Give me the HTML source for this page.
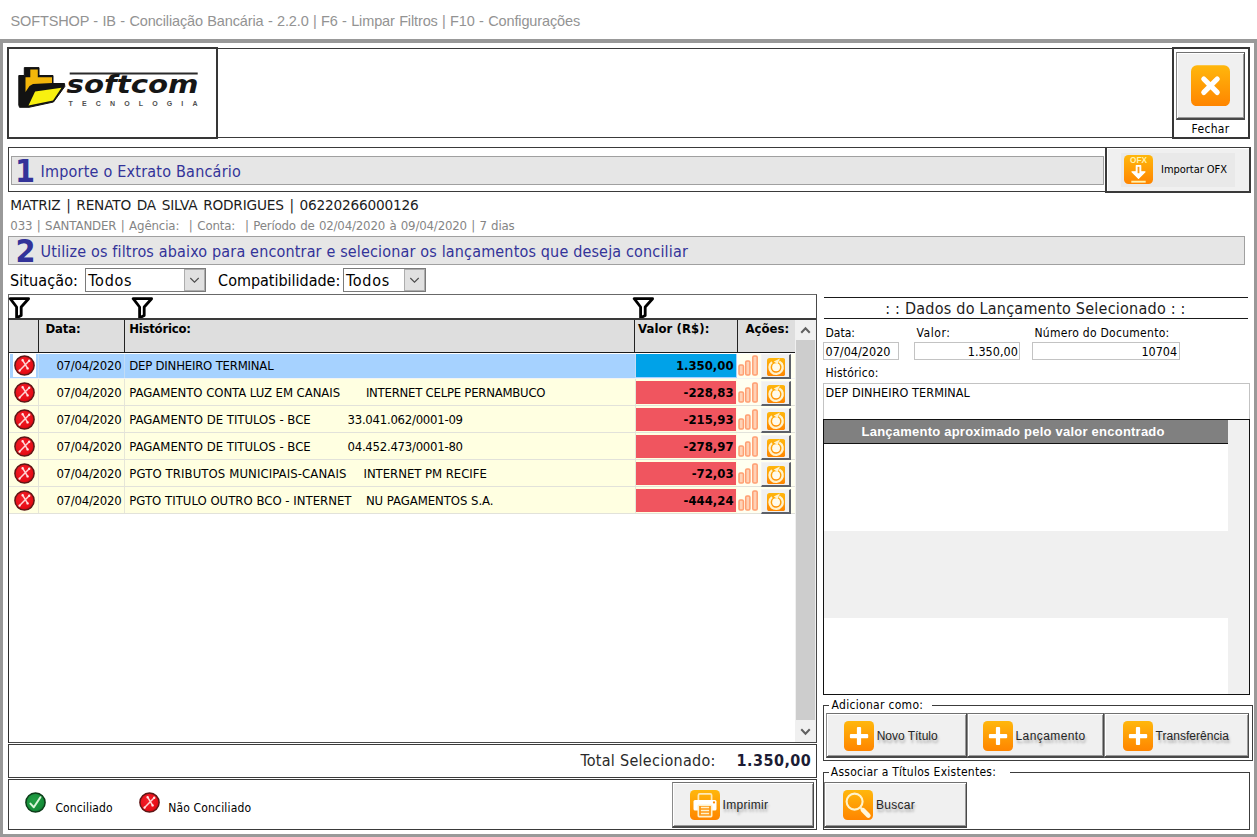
<!DOCTYPE html><html lang="pt-BR"><head><meta charset="utf-8"><title>SOFTSHOP - IB - Conciliação Bancária</title><style>
html,body{margin:0;padding:0;background:#fff}
body{width:1257px;height:837px;position:relative;overflow:hidden;font-family:"DejaVu Sans Condensed","Liberation Sans",sans-serif;color:#000}
div,span.t,svg,button,section,header,footer,fieldset,legend{position:absolute;box-sizing:border-box;margin:0;padding:0}
.t{white-space:pre}
.btn{background:#f0f0f0;border-style:solid;border-color:#707070 #484848 #484848 #8a8a8a;border-width:1px 1px 2px 1px;box-shadow:inset 1px 1px 0 #fff, inset -1px -1px 0 #9a9a9a;font:inherit}
.sbtn{background:#f0f0f0;border-style:solid;border-color:#f4f4f4 #5c6068 #5c6068 #f4f4f4;border-width:1px 2px 2px 1px;font:inherit}
.ar{color:#262626;text-shadow:1px 2.5px 2.5px rgba(0,0,0,.3)}
</style></head><body><svg width="0" height="0" style="left:0;top:0"><defs><linearGradient id="og" x1="0" y1="0" x2="0" y2="1"><stop offset="0" stop-color="#ffb70c"/><stop offset="1" stop-color="#ff8500"/></linearGradient><radialGradient id="rg" cx="0.42" cy="0.38" r="0.65"><stop offset="0" stop-color="#f4202a"/><stop offset="0.8" stop-color="#e60c16"/><stop offset="1" stop-color="#c00810"/></radialGradient><radialGradient id="gg" cx="0.42" cy="0.38" r="0.65"><stop offset="0" stop-color="#22a044"/><stop offset="0.8" stop-color="#148c38"/><stop offset="1" stop-color="#0e6c2a"/></radialGradient></defs></svg><header style="left:0;top:0;width:1257px;height:39px"><span class="t" style="left:10.50px;top:11.88px;font-size:14.5px;line-height:18px;font-family:'Liberation Sans',sans-serif;color:#939393;letter-spacing:-0.130px;word-spacing:0.5px;">SOFTSHOP - IB - Conciliação Bancária - 2.2.0 | F6 - Limpar Filtros | F10 - Configurações</span></header><div class="frame" style="left:0px;top:39px;width:1257px;height:798px;border-style:solid;border-color:#999999;border-width:4px 3px 3px 3px"></div><div style="left:218px;top:48px;width:955px;height:90px;border-top:1px solid #3a3a3a;border-bottom:1px solid #3a3a3a"></div><div class="logo" style="left:7px;top:47px;width:211px;height:92px;border:2px solid #363636;background:#fff"></div><svg style="left:15px;top:60px" width="195" height="55" viewBox="0 0 195 55"><polygon points="3.8,15.5 9.3,15.5 9.3,7.6 24,7.6 24,15.5 38,15.5 38,23.5 49.5,23.5 49.8,26.5 38.5,42 14,47.3 4.5,47.3 3.8,45" fill="#121212" stroke="#121212" stroke-width="1" stroke-linejoin="round"/><polygon points="10.5,17.3 15.3,17.3 15.3,9.6 22.8,9.6 22.8,17.3 37,17.3 37,23 18,24 14.5,26 10.5,32" fill="#f4b60a"/><polygon points="20.1,31.4 46.5,27.8 38,40.4 13.5,45.6" fill="#f8f010"/><path d="M54.7 13.5h128" stroke="#2a2a2a" stroke-width="2.2"/><text x="51.5" y="32.5" font-family="DejaVu Sans,Liberation Sans,sans-serif" font-weight="700" font-style="oblique" font-size="24.6" textLength="132" lengthAdjust="spacingAndGlyphs" fill="#161616">softcom</text><text x="53.5" y="45.6" font-family="Liberation Sans,sans-serif" font-weight="700" font-size="7" textLength="129" lengthAdjust="spacing" fill="#505050">TECNOLOGIA</text></svg><div style="left:1172px;top:47px;width:78px;height:92px;border:2px solid #363636;background:#fff"></div><button class="btn" style="left:1176px;top:52px;width:69px;height:68px;"></button><svg style="left:1191px;top:64.6px" width="39" height="41.4" viewBox="0 0 39 41"><rect x="0" y="0" width="39" height="41" rx="6" fill="url(#og)"/><path d="M12.8 13.8l13.4 13.4M26.2 13.8l-13.4 13.4" stroke="#fff" stroke-width="5.2" stroke-linecap="round"/></svg><span class="t" style="left:1191.50px;top:122.05px;font-size:12px;line-height:15px;letter-spacing:0.345px;">Fechar</span><div style="left:8px;top:147px;width:1098px;height:45px;border:1px solid #3a3a3a"></div><div style="left:11px;top:156px;width:1093px;height:29px;background:#e6e6e6;border:1px solid #a0a0a0"></div><span class="t" style="left:15.00px;top:150.93px;font-size:32px;line-height:40px;font-weight:700;color:#333399;">1</span><span class="t" style="left:40.50px;top:161.96px;font-size:16px;line-height:20px;color:#333399;letter-spacing:0.218px;">Importe o Extrato Bancário</span><button style="left:1105px;top:147px;width:146px;height:46px;background:#f0f0f0;border-style:solid;border-color:#3a3a3a;border-width:1px 2px 2px 2px;box-shadow:inset 1px 1px 0 #fff"></button><div style="left:1120.5px;top:152.5px;width:114.5px;height:34px;background:#e9e9e9"></div><svg style="left:1124px;top:155px" width="29" height="29" viewBox="0 0 29 29"><rect width="29" height="29" rx="4.5" fill="url(#og)"/><text x="14.5" y="8" text-anchor="middle" font-family="Liberation Sans,sans-serif" font-weight="700" font-size="8.2" fill="#fff3b0">OFX</text><path d="M12.3 10.6h4.4v6.2h4.3L14.5 23.4 8 16.8h4.3z" fill="#fff" stroke="#fff" stroke-width="1.2" stroke-linejoin="round"/><path d="M13.6 11.8h1.8v6.4h-1.8z" fill="#ff9a10"/><path d="M7.3 26.7h14.4" stroke="#fff3b0" stroke-width="1.9"/></svg><span class="t" style="left:1161.00px;top:162.89px;font-size:11px;line-height:14px;letter-spacing:-0.031px;">Importar OFX</span><span class="t" style="left:10.30px;top:196.96px;font-size:13.7px;line-height:17px;font-family:'DejaVu Sans','Liberation Sans',sans-serif;color:#1c1c1c;letter-spacing:-0.204px;word-spacing:1.6px;">MATRIZ | RENATO DA SILVA RODRIGUES | 06220266000126</span><span class="t" style="left:10.30px;top:218.92px;font-size:11.8px;line-height:15px;font-family:'DejaVu Sans','Liberation Sans',sans-serif;color:#858585;letter-spacing:-0.133px;word-spacing:0.8px;">033 | SANTANDER | Agência:</span><span class="t" style="left:188.70px;top:218.92px;font-size:11.8px;line-height:15px;font-family:'DejaVu Sans','Liberation Sans',sans-serif;color:#858585;letter-spacing:-0.148px;word-spacing:1.2px;">| Conta:</span><span class="t" style="left:245.00px;top:218.92px;font-size:11.8px;line-height:15px;font-family:'DejaVu Sans','Liberation Sans',sans-serif;color:#858585;letter-spacing:-0.188px;word-spacing:0.8px;">| Período de 02/04/2020 à 09/04/2020 | 7 dias</span><div style="left:8px;top:236px;width:1237px;height:28.5px;background:#e6e6e6;border:1px solid #a0a0a0"></div><span class="t" style="left:15.50px;top:230.93px;font-size:32px;line-height:40px;font-weight:700;color:#333399;">2</span><span class="t" style="left:40.50px;top:242.26px;font-size:16px;line-height:20px;color:#333399;letter-spacing:0.161px;">Utilize os filtros abaixo para encontrar e selecionar os lançamentos que deseja conciliar</span><span class="t" style="left:10.00px;top:270.76px;font-size:16px;line-height:20px;letter-spacing:0.097px;">Situação:</span><div class="combo" style="left:85.4px;top:268px;width:120.4px;height:23.6px;background:#fff;border:1px solid #7a7a7a"></div><div style="left:183.8px;top:269px;width:21px;height:21.6px;background:#e1e1e1;border:1px solid #adadad"></div><svg style="left:183.8px;top:269px" width="21" height="21.6" viewBox="0 0 21 21.6"><path d="M6.3 9 l4.2 4.2 l4.2 -4.2" fill="none" stroke="#4c4c4c" stroke-width="1.1"/></svg><span class="t" style="left:88.30px;top:270.96px;font-size:16px;line-height:20px;letter-spacing:0.734px;">Todos</span><span class="t" style="left:218.10px;top:270.76px;font-size:16px;line-height:20px;letter-spacing:-0.015px;">Compatibilidade:</span><div class="combo" style="left:343.2px;top:268px;width:82.8px;height:23.6px;background:#fff;border:1px solid #7a7a7a"></div><div style="left:404px;top:269px;width:21px;height:21.6px;background:#e1e1e1;border:1px solid #adadad"></div><svg style="left:404px;top:269px" width="21" height="21.6" viewBox="0 0 21 21.6"><path d="M6.3 9 l4.2 4.2 l4.2 -4.2" fill="none" stroke="#4c4c4c" stroke-width="1.1"/></svg><span class="t" style="left:346.00px;top:270.96px;font-size:16px;line-height:20px;letter-spacing:0.734px;">Todos</span><div class="grid" style="left:8px;top:294px;width:809px;height:449px;border-style:solid;border-width:1px;border-color:#686868 #484848 #484848 #686868;background:#fff"></div><div style="left:8px;top:318px;width:1px;height:425px;background:#2a2a2a"></div><svg style="left:7.7px;top:295.5px" width="23" height="23" viewBox="0 0 23 23"><path d="M2.2 2.7h18.4l-7.4 8.3v8.4l-4.6 2.4v-10.8z" fill="#fff" stroke="#000" stroke-width="2.8" stroke-linejoin="round"/></svg><svg style="left:130.5px;top:295.5px" width="23" height="23" viewBox="0 0 23 23"><path d="M2.2 2.7h18.4l-7.4 8.3v8.4l-4.6 2.4v-10.8z" fill="#fff" stroke="#000" stroke-width="2.8" stroke-linejoin="round"/></svg><svg style="left:631.5px;top:295.5px" width="23" height="23" viewBox="0 0 23 23"><path d="M2.2 2.7h18.4l-7.4 8.3v8.4l-4.6 2.4v-10.8z" fill="#fff" stroke="#000" stroke-width="2.8" stroke-linejoin="round"/></svg><div style="left:9px;top:318px;width:807px;height:2px;background:#3a3a3a"></div><div class="ghead" style="left:9px;top:320px;width:786px;height:33.3px;background:#dedede;border-bottom:1px solid #1a1a1a"></div><div style="left:37.7px;top:320px;width:1.6px;height:32px;background:#222"></div><div style="left:123.7px;top:320px;width:1.6px;height:32px;background:#222"></div><div style="left:633.7px;top:320px;width:1.6px;height:32px;background:#222"></div><div style="left:736.7px;top:320px;width:1.6px;height:32px;background:#222"></div><span class="t" style="left:45.50px;top:320.70px;font-size:13px;line-height:16px;font-weight:700;letter-spacing:-0.153px;">Data:</span><span class="t" style="left:129.20px;top:320.70px;font-size:13px;line-height:16px;font-weight:700;letter-spacing:-0.231px;">Histórico:</span><span class="t" style="left:638.00px;top:320.70px;font-size:13px;line-height:16px;font-weight:700;letter-spacing:0.080px;">Valor (R$):</span><span class="t" style="left:745.40px;top:320.70px;font-size:13px;line-height:16px;font-weight:700;letter-spacing:0.032px;">Ações:</span><div style="left:795px;top:320px;width:21px;height:422px;background:#f0f0f0"></div><div style="left:796px;top:340px;width:19px;height:380px;background:#cdcdcd"></div><svg style="left:795px;top:320px" width="21" height="422" viewBox="0 0 21 422"><path d="M6.25 12.75 l4.25 -4.5 l4.25 4.5" fill="none" stroke="#606060" stroke-width="2"/><path d="M6.25 409.25 l4.25 4.5 l4.25 -4.5" fill="none" stroke="#606060" stroke-width="2"/></svg><div style="left:10px;top:353.5px;width:785px;height:24.5px;background:#a6d2ff"></div><div style="left:737px;top:353.5px;width:58px;height:24.5px;background:#fffff0"></div><div style="left:9px;top:378px;width:786px;height:1px;background:#f4f4f4"></div><div style="left:38px;top:353.5px;width:1px;height:24.5px;background:#c2dcf5"></div><div style="left:124px;top:353.5px;width:1px;height:24.5px;background:#c2dcf5"></div><div style="left:634.5px;top:353.5px;width:1px;height:24.5px;background:#c2dcf5"></div><div style="left:13px;top:354px;width:23.3px;height:23.2px;background:#fff"></div><svg style="left:14px;top:355px" width="21" height="21" viewBox="0 0 21 21"><circle cx="10.5" cy="10.5" r="9.6" fill="url(#rg)" stroke="#5e1616" stroke-width="1.5"/><path d="M8.6 5.2l5 8.2M15.2 5.8L5.6 15.6" stroke="#ffd6d6" stroke-width="1.5" stroke-linecap="round"/><path d="M15.2 5.8h.01M5.6 15.6h.01M8.6 5.2h.01M13.6 13.4h.01" stroke="#ffe4e4" stroke-width="2.4" stroke-linecap="round"/></svg><span class="t" style="left:56.40px;top:358.20px;font-size:13px;line-height:16px;letter-spacing:-0.241px;">07/04/2020</span><span class="t" style="left:129.20px;top:358.20px;font-size:13px;line-height:16px;letter-spacing:-0.200px;">DEP DINHEIRO TERMINAL</span><div style="left:636px;top:354px;width:100px;height:23px;background:#00a2e8"></div><span class="t" style="left:675.88px;top:358.20px;font-size:13px;line-height:16px;font-weight:700;">1.350,00</span><svg style="left:738px;top:355.2px" width="21" height="22" viewBox="0 0 21 22"><rect x="1" y="10" width="4.4" height="10" rx="1.3" fill="#ffd2b6" stroke="#ff9f72" stroke-width="1.5"/><rect x="7.7" y="6" width="4.2" height="14" rx="1.3" fill="#ffd2b6" stroke="#ff9f72" stroke-width="1.5"/><rect x="14.8" y="1" width="4.4" height="19" rx="1.3" fill="#ffd2b6" stroke="#ff9f72" stroke-width="1.5"/></svg><button class="sbtn" style="left:761px;top:354.3px;width:30.2px;height:25.2px;"></button><svg style="left:767px;top:357.6px" width="18.2" height="18.2" viewBox="0 0 18 18"><rect width="18" height="18" rx="2.5" fill="url(#og)"/><path d="M12.08 3.42 A6.55 6.55 0 1 1 4.97 4.04" fill="none" stroke="#fff2cc" stroke-width="2.3"/><path d="M10.46 5.91 L12.82 0.61 L6.64 3.36 z" fill="#fff2cc"/><circle cx="9" cy="9.2" r="3.9" fill="#fffaea"/></svg><div style="left:9px;top:379px;width:786px;height:26px;background:#ffffe1"></div><div style="left:737px;top:379px;width:58px;height:26px;background:#fffff0"></div><div style="left:9px;top:405px;width:786px;height:1px;background:#e2e2da"></div><div style="left:38px;top:379px;width:1px;height:26px;background:#e6e6d8"></div><div style="left:124px;top:379px;width:1px;height:26px;background:#e6e6d8"></div><div style="left:634.5px;top:379px;width:1px;height:26px;background:#e6e6d8"></div><svg style="left:14px;top:382px" width="21" height="21" viewBox="0 0 21 21"><circle cx="10.5" cy="10.5" r="9.6" fill="url(#rg)" stroke="#5e1616" stroke-width="1.5"/><path d="M8.6 5.2l5 8.2M15.2 5.8L5.6 15.6" stroke="#ffd6d6" stroke-width="1.5" stroke-linecap="round"/><path d="M15.2 5.8h.01M5.6 15.6h.01M8.6 5.2h.01M13.6 13.4h.01" stroke="#ffe4e4" stroke-width="2.4" stroke-linecap="round"/></svg><span class="t" style="left:56.40px;top:385.20px;font-size:13px;line-height:16px;letter-spacing:-0.241px;">07/04/2020</span><span class="t" style="left:129.30px;top:385.20px;font-size:13px;line-height:16px;letter-spacing:-0.049px;">PAGAMENTO CONTA LUZ EM CANAIS</span><span class="t" style="left:365.90px;top:385.20px;font-size:13px;line-height:16px;letter-spacing:-0.241px;">INTERNET CELPE PERNAMBUCO</span><div style="left:636px;top:381px;width:100px;height:23px;background:#f0555f"></div><span class="t" style="left:683.60px;top:385.20px;font-size:13px;line-height:16px;font-weight:700;">-228,83</span><svg style="left:738px;top:382.2px" width="21" height="22" viewBox="0 0 21 22"><rect x="1" y="10" width="4.4" height="10" rx="1.3" fill="#ffd2b6" stroke="#ff9f72" stroke-width="1.5"/><rect x="7.7" y="6" width="4.2" height="14" rx="1.3" fill="#ffd2b6" stroke="#ff9f72" stroke-width="1.5"/><rect x="14.8" y="1" width="4.4" height="19" rx="1.3" fill="#ffd2b6" stroke="#ff9f72" stroke-width="1.5"/></svg><button class="sbtn" style="left:761px;top:381.3px;width:30.2px;height:25.2px;"></button><svg style="left:767px;top:384.6px" width="18.2" height="18.2" viewBox="0 0 18 18"><rect width="18" height="18" rx="2.5" fill="url(#og)"/><path d="M12.08 3.42 A6.55 6.55 0 1 1 4.97 4.04" fill="none" stroke="#fff2cc" stroke-width="2.3"/><path d="M10.46 5.91 L12.82 0.61 L6.64 3.36 z" fill="#fff2cc"/><circle cx="9" cy="9.2" r="3.9" fill="#fffaea"/></svg><div style="left:9px;top:406px;width:786px;height:26px;background:#ffffe1"></div><div style="left:737px;top:406px;width:58px;height:26px;background:#fffff0"></div><div style="left:9px;top:432px;width:786px;height:1px;background:#e2e2da"></div><div style="left:38px;top:406px;width:1px;height:26px;background:#e6e6d8"></div><div style="left:124px;top:406px;width:1px;height:26px;background:#e6e6d8"></div><div style="left:634.5px;top:406px;width:1px;height:26px;background:#e6e6d8"></div><svg style="left:14px;top:409px" width="21" height="21" viewBox="0 0 21 21"><circle cx="10.5" cy="10.5" r="9.6" fill="url(#rg)" stroke="#5e1616" stroke-width="1.5"/><path d="M8.6 5.2l5 8.2M15.2 5.8L5.6 15.6" stroke="#ffd6d6" stroke-width="1.5" stroke-linecap="round"/><path d="M15.2 5.8h.01M5.6 15.6h.01M8.6 5.2h.01M13.6 13.4h.01" stroke="#ffe4e4" stroke-width="2.4" stroke-linecap="round"/></svg><span class="t" style="left:56.40px;top:412.20px;font-size:13px;line-height:16px;letter-spacing:-0.241px;">07/04/2020</span><span class="t" style="left:129.30px;top:412.20px;font-size:13px;line-height:16px;">PAGAMENTO DE TITULOS - BCE</span><span class="t" style="left:347.50px;top:412.20px;font-size:13px;line-height:16px;letter-spacing:-0.247px;">33.041.062/0001-09</span><div style="left:636px;top:408px;width:100px;height:23px;background:#f0555f"></div><span class="t" style="left:683.60px;top:412.20px;font-size:13px;line-height:16px;font-weight:700;">-215,93</span><svg style="left:738px;top:409.2px" width="21" height="22" viewBox="0 0 21 22"><rect x="1" y="10" width="4.4" height="10" rx="1.3" fill="#ffd2b6" stroke="#ff9f72" stroke-width="1.5"/><rect x="7.7" y="6" width="4.2" height="14" rx="1.3" fill="#ffd2b6" stroke="#ff9f72" stroke-width="1.5"/><rect x="14.8" y="1" width="4.4" height="19" rx="1.3" fill="#ffd2b6" stroke="#ff9f72" stroke-width="1.5"/></svg><button class="sbtn" style="left:761px;top:408.3px;width:30.2px;height:25.2px;"></button><svg style="left:767px;top:411.6px" width="18.2" height="18.2" viewBox="0 0 18 18"><rect width="18" height="18" rx="2.5" fill="url(#og)"/><path d="M12.08 3.42 A6.55 6.55 0 1 1 4.97 4.04" fill="none" stroke="#fff2cc" stroke-width="2.3"/><path d="M10.46 5.91 L12.82 0.61 L6.64 3.36 z" fill="#fff2cc"/><circle cx="9" cy="9.2" r="3.9" fill="#fffaea"/></svg><div style="left:9px;top:433px;width:786px;height:26px;background:#ffffe1"></div><div style="left:737px;top:433px;width:58px;height:26px;background:#fffff0"></div><div style="left:9px;top:459px;width:786px;height:1px;background:#e2e2da"></div><div style="left:38px;top:433px;width:1px;height:26px;background:#e6e6d8"></div><div style="left:124px;top:433px;width:1px;height:26px;background:#e6e6d8"></div><div style="left:634.5px;top:433px;width:1px;height:26px;background:#e6e6d8"></div><svg style="left:14px;top:436px" width="21" height="21" viewBox="0 0 21 21"><circle cx="10.5" cy="10.5" r="9.6" fill="url(#rg)" stroke="#5e1616" stroke-width="1.5"/><path d="M8.6 5.2l5 8.2M15.2 5.8L5.6 15.6" stroke="#ffd6d6" stroke-width="1.5" stroke-linecap="round"/><path d="M15.2 5.8h.01M5.6 15.6h.01M8.6 5.2h.01M13.6 13.4h.01" stroke="#ffe4e4" stroke-width="2.4" stroke-linecap="round"/></svg><span class="t" style="left:56.40px;top:439.20px;font-size:13px;line-height:16px;letter-spacing:-0.241px;">07/04/2020</span><span class="t" style="left:129.30px;top:439.20px;font-size:13px;line-height:16px;">PAGAMENTO DE TITULOS - BCE</span><span class="t" style="left:347.50px;top:439.20px;font-size:13px;line-height:16px;letter-spacing:-0.247px;">04.452.473/0001-80</span><div style="left:636px;top:435px;width:100px;height:23px;background:#f0555f"></div><span class="t" style="left:683.60px;top:439.20px;font-size:13px;line-height:16px;font-weight:700;">-278,97</span><svg style="left:738px;top:436.2px" width="21" height="22" viewBox="0 0 21 22"><rect x="1" y="10" width="4.4" height="10" rx="1.3" fill="#ffd2b6" stroke="#ff9f72" stroke-width="1.5"/><rect x="7.7" y="6" width="4.2" height="14" rx="1.3" fill="#ffd2b6" stroke="#ff9f72" stroke-width="1.5"/><rect x="14.8" y="1" width="4.4" height="19" rx="1.3" fill="#ffd2b6" stroke="#ff9f72" stroke-width="1.5"/></svg><button class="sbtn" style="left:761px;top:435.3px;width:30.2px;height:25.2px;"></button><svg style="left:767px;top:438.6px" width="18.2" height="18.2" viewBox="0 0 18 18"><rect width="18" height="18" rx="2.5" fill="url(#og)"/><path d="M12.08 3.42 A6.55 6.55 0 1 1 4.97 4.04" fill="none" stroke="#fff2cc" stroke-width="2.3"/><path d="M10.46 5.91 L12.82 0.61 L6.64 3.36 z" fill="#fff2cc"/><circle cx="9" cy="9.2" r="3.9" fill="#fffaea"/></svg><div style="left:9px;top:460px;width:786px;height:26px;background:#ffffe1"></div><div style="left:737px;top:460px;width:58px;height:26px;background:#fffff0"></div><div style="left:9px;top:486px;width:786px;height:1px;background:#e2e2da"></div><div style="left:38px;top:460px;width:1px;height:26px;background:#e6e6d8"></div><div style="left:124px;top:460px;width:1px;height:26px;background:#e6e6d8"></div><div style="left:634.5px;top:460px;width:1px;height:26px;background:#e6e6d8"></div><svg style="left:14px;top:463px" width="21" height="21" viewBox="0 0 21 21"><circle cx="10.5" cy="10.5" r="9.6" fill="url(#rg)" stroke="#5e1616" stroke-width="1.5"/><path d="M8.6 5.2l5 8.2M15.2 5.8L5.6 15.6" stroke="#ffd6d6" stroke-width="1.5" stroke-linecap="round"/><path d="M15.2 5.8h.01M5.6 15.6h.01M8.6 5.2h.01M13.6 13.4h.01" stroke="#ffe4e4" stroke-width="2.4" stroke-linecap="round"/></svg><span class="t" style="left:56.40px;top:466.20px;font-size:13px;line-height:16px;letter-spacing:-0.241px;">07/04/2020</span><span class="t" style="left:129.30px;top:466.20px;font-size:13px;line-height:16px;letter-spacing:0.101px;">PGTO TRIBUTOS MUNICIPAIS-CANAIS</span><span class="t" style="left:363.50px;top:466.20px;font-size:13px;line-height:16px;letter-spacing:-0.036px;">INTERNET PM RECIFE</span><div style="left:636px;top:462px;width:100px;height:23px;background:#f0555f"></div><span class="t" style="left:691.74px;top:466.20px;font-size:13px;line-height:16px;font-weight:700;">-72,03</span><svg style="left:738px;top:463.2px" width="21" height="22" viewBox="0 0 21 22"><rect x="1" y="10" width="4.4" height="10" rx="1.3" fill="#ffd2b6" stroke="#ff9f72" stroke-width="1.5"/><rect x="7.7" y="6" width="4.2" height="14" rx="1.3" fill="#ffd2b6" stroke="#ff9f72" stroke-width="1.5"/><rect x="14.8" y="1" width="4.4" height="19" rx="1.3" fill="#ffd2b6" stroke="#ff9f72" stroke-width="1.5"/></svg><button class="sbtn" style="left:761px;top:462.3px;width:30.2px;height:25.2px;"></button><svg style="left:767px;top:465.6px" width="18.2" height="18.2" viewBox="0 0 18 18"><rect width="18" height="18" rx="2.5" fill="url(#og)"/><path d="M12.08 3.42 A6.55 6.55 0 1 1 4.97 4.04" fill="none" stroke="#fff2cc" stroke-width="2.3"/><path d="M10.46 5.91 L12.82 0.61 L6.64 3.36 z" fill="#fff2cc"/><circle cx="9" cy="9.2" r="3.9" fill="#fffaea"/></svg><div style="left:9px;top:487px;width:786px;height:26px;background:#ffffe1"></div><div style="left:737px;top:487px;width:58px;height:26px;background:#fffff0"></div><div style="left:9px;top:513px;width:786px;height:1px;background:#e2e2da"></div><div style="left:38px;top:487px;width:1px;height:26px;background:#e6e6d8"></div><div style="left:124px;top:487px;width:1px;height:26px;background:#e6e6d8"></div><div style="left:634.5px;top:487px;width:1px;height:26px;background:#e6e6d8"></div><svg style="left:14px;top:490px" width="21" height="21" viewBox="0 0 21 21"><circle cx="10.5" cy="10.5" r="9.6" fill="url(#rg)" stroke="#5e1616" stroke-width="1.5"/><path d="M8.6 5.2l5 8.2M15.2 5.8L5.6 15.6" stroke="#ffd6d6" stroke-width="1.5" stroke-linecap="round"/><path d="M15.2 5.8h.01M5.6 15.6h.01M8.6 5.2h.01M13.6 13.4h.01" stroke="#ffe4e4" stroke-width="2.4" stroke-linecap="round"/></svg><span class="t" style="left:56.40px;top:493.20px;font-size:13px;line-height:16px;letter-spacing:-0.241px;">07/04/2020</span><span class="t" style="left:129.30px;top:493.20px;font-size:13px;line-height:16px;letter-spacing:0.010px;">PGTO TITULO OUTRO BCO - INTERNET</span><span class="t" style="left:365.90px;top:493.20px;font-size:13px;line-height:16px;letter-spacing:-0.046px;">NU PAGAMENTOS S.A.</span><div style="left:636px;top:489px;width:100px;height:23px;background:#f0555f"></div><span class="t" style="left:683.60px;top:493.20px;font-size:13px;line-height:16px;font-weight:700;">-444,24</span><svg style="left:738px;top:490.2px" width="21" height="22" viewBox="0 0 21 22"><rect x="1" y="10" width="4.4" height="10" rx="1.3" fill="#ffd2b6" stroke="#ff9f72" stroke-width="1.5"/><rect x="7.7" y="6" width="4.2" height="14" rx="1.3" fill="#ffd2b6" stroke="#ff9f72" stroke-width="1.5"/><rect x="14.8" y="1" width="4.4" height="19" rx="1.3" fill="#ffd2b6" stroke="#ff9f72" stroke-width="1.5"/></svg><button class="sbtn" style="left:761px;top:489.3px;width:30.2px;height:25.2px;"></button><svg style="left:767px;top:492.6px" width="18.2" height="18.2" viewBox="0 0 18 18"><rect width="18" height="18" rx="2.5" fill="url(#og)"/><path d="M12.08 3.42 A6.55 6.55 0 1 1 4.97 4.04" fill="none" stroke="#fff2cc" stroke-width="2.3"/><path d="M10.46 5.91 L12.82 0.61 L6.64 3.36 z" fill="#fff2cc"/><circle cx="9" cy="9.2" r="3.9" fill="#fffaea"/></svg><div style="left:8px;top:744px;width:808.5px;height:34px;border:1px solid #3a3a3a;background:#fff"></div><span class="t" style="left:580.40px;top:750.56px;font-size:16px;line-height:20px;color:#2a2a2a;letter-spacing:0.281px;">Total Selecionado:</span><span class="t" style="left:736.50px;top:750.56px;font-size:16px;line-height:20px;font-weight:700;color:#1c1c34;letter-spacing:0.471px;">1.350,00</span><div style="left:8px;top:779px;width:809px;height:50.5px;border:1px solid #3a3a3a;background:#fff"></div><svg style="left:25px;top:792px" width="21" height="21" viewBox="0 0 21 21"><circle cx="10.5" cy="10.5" r="9.6" fill="url(#gg)" stroke="#0c3c18" stroke-width="1.5"/><path d="M5.4 11.6l3.4 3.6 6.6-10" fill="none" stroke="#d8f5d8" stroke-width="2" stroke-linecap="round" stroke-linejoin="round"/></svg><span class="t" style="left:55.40px;top:800.65px;font-size:12px;line-height:15px;letter-spacing:0.140px;">Conciliado</span><svg style="left:139px;top:792px" width="21" height="21" viewBox="0 0 21 21"><circle cx="10.5" cy="10.5" r="9.6" fill="url(#rg)" stroke="#5e1616" stroke-width="1.5"/><path d="M8.6 5.2l5 8.2M15.2 5.8L5.6 15.6" stroke="#ffd6d6" stroke-width="1.5" stroke-linecap="round"/><path d="M15.2 5.8h.01M5.6 15.6h.01M8.6 5.2h.01M13.6 13.4h.01" stroke="#ffe4e4" stroke-width="2.4" stroke-linecap="round"/></svg><span class="t" style="left:168.20px;top:800.65px;font-size:12px;line-height:15px;letter-spacing:0.170px;">Não Conciliado</span><button class="btn" style="left:672px;top:782px;width:142px;height:45.5px;"></button><svg style="left:690px;top:790px" width="30" height="30" viewBox="0 0 30 30"><rect width="30" height="30" rx="4.5" fill="url(#og)"/><path d="M8.4 10.5V5.2q0-1.4 1.4-1.4h10.4q1.4 0 1.4 1.4V10.5" fill="none" stroke="#ffe9b8" stroke-width="1.7"/><rect x="3.5" y="10" width="23" height="10.5" rx="1.5" fill="#fff"/><circle cx="24" cy="12.4" r="1.1" fill="#ff8a00"/><rect x="8.3" y="15.2" width="13.4" height="11.4" rx="0.8" fill="#ff9712" stroke="#fff1cc" stroke-width="1.6"/><path d="M10.9 17.6h8.2M10.9 20.6h8.2M10.9 23.6h8.2" stroke="#fff1cc" stroke-width="1.5"/></svg><span class="t ar" style="left:722.60px;top:798.04px;font-size:12px;line-height:15px;font-family:'Liberation Sans',sans-serif;letter-spacing:0.296px;">Imprimir</span><div style="left:823.5px;top:297px;width:424px;height:1px;background:#1a1a1a"></div><div style="left:823.5px;top:317.7px;width:424px;height:1px;background:#1a1a1a"></div><span class="t" style="left:885.20px;top:298.86px;font-size:16px;line-height:20px;color:#1c1c1c;letter-spacing:0.236px;">: : Dados do Lançamento Selecionado : :</span><span class="t" style="left:825.50px;top:326.05px;font-size:12px;line-height:15px;letter-spacing:0.016px;">Data:</span><span class="t" style="left:916.50px;top:326.05px;font-size:12px;line-height:15px;letter-spacing:0.576px;">Valor:</span><span class="t" style="left:1034.50px;top:326.05px;font-size:12px;line-height:15px;letter-spacing:0.282px;">Número do Documento:</span><div style="left:823px;top:342px;width:76px;height:18px;background:#fff;border:1px solid #c3c3c3"></div><div style="left:914px;top:342px;width:106px;height:18px;background:#fff;border:1px solid #c3c3c3"></div><div style="left:1032px;top:342px;width:148px;height:18px;background:#fff;border:1px solid #c3c3c3"></div><span class="t" style="left:825.50px;top:344.18px;font-size:12.5px;line-height:16px;letter-spacing:0.019px;">07/04/2020</span><span class="t" style="left:967.74px;top:344.18px;font-size:12.5px;line-height:16px;">1.350,00</span><span class="t" style="left:1141.42px;top:344.18px;font-size:12.5px;line-height:16px;">10704</span><span class="t" style="left:825.50px;top:366.45px;font-size:12px;line-height:15px;letter-spacing:0.180px;">Histórico:</span><div style="left:823px;top:383px;width:427px;height:37px;background:#fff;border:1px solid #c3c3c3"></div><span class="t" style="left:825.50px;top:385.18px;font-size:12.5px;line-height:16px;letter-spacing:0.077px;">DEP DINHEIRO TERMINAL</span><div style="left:823px;top:419px;width:427px;height:275.5px;background:#f0f0f0;border:1px solid #111"></div><div style="left:824px;top:420px;width:404px;height:24px;background:#808080;border-bottom:1px solid #111"></div><span class="t" style="left:861.50px;top:424.30px;font-size:13px;line-height:16px;font-family:'Liberation Sans',sans-serif;font-weight:700;color:#fff;letter-spacing:0.231px;">Lançamento aproximado pelo valor encontrado</span><div style="left:824px;top:444px;width:404px;height:87px;background:#fff"></div><div style="left:824px;top:618px;width:404px;height:75.5px;background:#fff"></div><div style="left:823px;top:705px;width:429.5px;height:55.5px;border:1px solid #3c3c3c"></div><div style="left:829px;top:700px;width:102.5px;height:12px;background:#fff"></div><span class="t" style="left:831.50px;top:698.45px;font-size:12px;line-height:15px;letter-spacing:0.307px;">Adicionar como:</span><button class="btn" style="left:826px;top:713px;width:141px;height:45px;"></button><button class="btn" style="left:967px;top:713px;width:137.4px;height:45px;"></button><button class="btn" style="left:1104.4px;top:713px;width:144.6px;height:45px;"></button><svg style="left:844px;top:720.8px" width="30" height="30" viewBox="0 0 30 30"><rect x="0" y="0" width="30" height="30" rx="4.5" fill="url(#og)"/><rect x="5.9" y="13" width="18.3" height="4.2" rx="1" fill="#fff"/><rect x="12.9" y="6" width="4.2" height="18.1" rx="1" fill="#fff"/></svg><span class="t ar" style="left:876.70px;top:729.34px;font-size:12px;line-height:15px;font-family:'Liberation Sans',sans-serif;letter-spacing:-0.023px;">Novo Título</span><svg style="left:982.9px;top:720.8px" width="30" height="30" viewBox="0 0 30 30"><rect x="0" y="0" width="30" height="30" rx="4.5" fill="url(#og)"/><rect x="5.9" y="13" width="18.3" height="4.2" rx="1" fill="#fff"/><rect x="12.9" y="6" width="4.2" height="18.1" rx="1" fill="#fff"/></svg><span class="t ar" style="left:1015.50px;top:729.34px;font-size:12px;line-height:15px;font-family:'Liberation Sans',sans-serif;letter-spacing:0.415px;">Lançamento</span><svg style="left:1123.3px;top:720.8px" width="30" height="30" viewBox="0 0 30 30"><rect x="0" y="0" width="30" height="30" rx="4.5" fill="url(#og)"/><rect x="5.9" y="13" width="18.3" height="4.2" rx="1" fill="#fff"/><rect x="12.9" y="6" width="4.2" height="18.1" rx="1" fill="#fff"/></svg><span class="t ar" style="left:1155.50px;top:729.34px;font-size:12px;line-height:15px;font-family:'Liberation Sans',sans-serif;letter-spacing:0.037px;">Transferência</span><div style="left:822.5px;top:772px;width:427.7px;height:57.6px;border:1px solid #3c3c3c"></div><div style="left:829px;top:766px;width:181px;height:12px;background:#fff"></div><span class="t" style="left:830.80px;top:765.45px;font-size:12px;line-height:15px;letter-spacing:0.253px;">Associar a Títulos Existentes:</span><button class="btn" style="left:824px;top:782px;width:143px;height:45.6px;"></button><svg style="left:843px;top:790px" width="30" height="30" viewBox="0 0 30 30"><rect width="30" height="30" rx="4.5" fill="url(#og)"/><circle cx="11.6" cy="11.6" r="8" fill="none" stroke="#fff3cc" stroke-width="2.1"/><path d="M17.6 17.8l1.6 1.6" stroke="#fff3cc" stroke-width="2.4"/><path d="M20 20.2l5.4 5.4" stroke="#fff6dc" stroke-width="4.6" stroke-linecap="round"/></svg><span class="t ar" style="left:875.90px;top:798.04px;font-size:12px;line-height:15px;font-family:'Liberation Sans',sans-serif;letter-spacing:0.323px;">Buscar</span></body></html>
